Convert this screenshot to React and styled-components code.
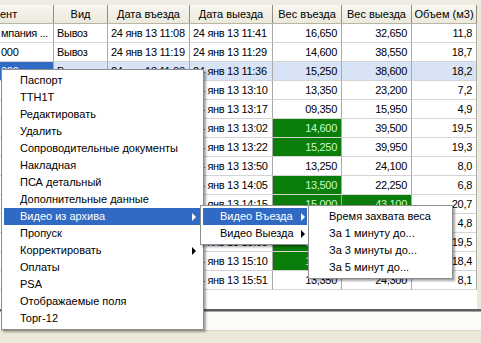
import React from 'react';
import styled, { createGlobalStyle } from 'styled-components';

const GlobalStyle = createGlobalStyle`
    html, body {
        margin: 0;
        padding: 0;
        background: #ece9d8;
    }
    body {
        font-family: "Liberation Sans", Arial, sans-serif;
        font-size: 11px;
    }
`;

const COLS = [54, 54, 82, 83, 69, 70, 65];
const ALIGN = ['left', 'left', 'left', 'left', 'right', 'right', 'right'];

const Window = styled.div`
    position: relative;
    width: 481px;
    height: 343px;
    overflow: hidden;
    display: flex;
    flex-direction: column;
    background: #ece9d8;
`;

const TopStrip = styled.div`
    height: 5px;
    background: #efede2;
`;

const Grid = styled.div`
    display: flex;
    flex-direction: column;
    width: 477px;
    background: #fff;
`;

const HeaderRow = styled.div`
    display: flex;
    height: 19px;
    background: linear-gradient(#f8f7f1, #ebe9dc);
    border-bottom: 1px solid #b9b5a4;
    box-sizing: border-box;
`;

const HeaderCell = styled.div`
    width: ${p => p.$w}px;
    box-sizing: border-box;
    border-right: 1px solid #8f8c80;
    line-height: 18px;
    text-align: ${p => (p.$cut ? 'left' : 'center')};
    white-space: nowrap;
    overflow: hidden;
    color: #000;
`;

const Row = styled.div`
    display: flex;
    height: 19px;
`;

const Cell = styled.div`
    width: ${p => p.$w}px;
    box-sizing: border-box;
    border-right: 1px solid #a9a9a9;
    border-bottom: 1px solid #d4d4d4;
    line-height: 18px;
    letter-spacing: -0.3px;
    white-space: nowrap;
    overflow: hidden;
    text-align: ${p => p.$align};
    padding: ${p => (p.$align === 'right' ? '0 4px 0 0' : p.$first ? '0 0 0 1px' : '0 0 0 3px')};
    background: ${p => (p.$focus ? '#316ac5' : p.$green ? '#0b7d0b' : p.$sel ? '#d8e3f5' : '#fff')};
    color: ${p => (p.$focus ? '#fff' : p.$green ? '#c8f7c8' : '#000')};
`;

const Filler = styled.div`
    height: 19px;
    background: #fff;
`;

const Splitter = styled.div`
    height: 3px;
    background: #5e5e5e;
    border-bottom: 1px solid #a5a5a5;
    box-sizing: border-box;
`;

const WhitePanel = styled.div`
    height: 18px;
    background: #fbfbf8;
`;

const StatusBar = styled.div`
    flex: 1;
    background: #ece9d8;
    border-top: 1px solid #dcd8c6;
`;

const Menu = styled.div`
    position: absolute;
    left: ${p => p.$x}px;
    top: ${p => p.$y}px;
    width: ${p => p.$w}px;
    box-sizing: border-box;
    background: #fff;
    border: 1px solid #8d8d8d;
    padding: ${p => p.$pad}px;
    box-shadow: 2px 2px 2px rgba(0, 0, 0, 0.35);
    display: flex;
    flex-direction: column;
`;

const Item = styled.div`
    height: 17px;
    line-height: 17px;
    display: flex;
    align-items: center;
    justify-content: space-between;
    padding: 0 ${p => p.$right}px 0 ${p => p.$left}px;
    background: ${p => (p.$active ? '#316ac5' : 'transparent')};
    color: ${p => (p.$active ? '#fff' : '#000')};
    white-space: nowrap;
`;

const Arrow = styled.span`
    width: 0;
    height: 0;
    border-top: 4px solid transparent;
    border-bottom: 4px solid transparent;
    border-left: 4px solid ${p => (p.$active ? '#fff' : '#000')};
`;

// cells that sit fully under the popup menus are left blank
const rows = [
    { c: ['мпания ...', 'Вывоз', '24 янв 13 11:08', '24 янв 13 11:41', '16,650', '32,650', '11,8'] },
    { c: ['000', 'Вывоз', '24 янв 13 11:19', '24 янв 13 11:29', '14,600', '38,550', '18,7'] },
    { c: ['000', 'Вывоз', '24 янв 13 11:08', '24 янв 13 11:36', '15,250', '38,600', '18,2'], sel: true },
    { c: ['', '', '', '24 янв 13 13:10', '13,350', '23,200', '7,2'] },
    { c: ['', '', '', '24 янв 13 13:17', '09,350', '15,950', '4,9'] },
    { c: ['', '', '', '24 янв 13 13:02', '14,600', '39,500', '19,5'], g: [4] },
    { c: ['', '', '', '24 янв 13 13:22', '15,250', '39,950', '19,3'], g: [4] },
    { c: ['', '', '', '24 янв 13 13:50', '13,250', '24,100', '8,0'] },
    { c: ['', '', '', '24 янв 13 14:05', '13,500', '22,250', '6,8'], g: [4] },
    { c: ['', '', '', '24 янв 13 14:15', '15,000', '43,100', '20,7'], g: [4, 5] },
    { c: ['', '', '', '', '', '', '4,8'] },
    { c: ['', '', '', '24 янв 13 15:05', '14,950', '', '19,5'], g: [4] },
    { c: ['', '', '', '24 янв 13 15:10', '14,700', '', '18,4'], g: [4] },
    { c: ['', '', '', '24 янв 13 15:51', '13,350', '24,300', '8,1'] },
];

const headers = ['ент', 'Вид', 'Дата въезда', 'Дата выезда', 'Вес въезда', 'Вес выезда', 'Объем (м3)'];

const mainItems = [
    'Паспорт', 'ТТН1Т', 'Редактировать', 'Удалить', 'Сопроводительные документы',
    'Накладная', 'ПСА детальный', 'Дополнительные данные', 'Видео из архива', 'Пропуск',
    'Корректировать', 'Оплаты', 'PSA', 'Отображаемые поля', 'Торг-12',
];
const withArrow = ['Видео из архива', 'Корректировать'];

const App = () => (
    <Window>
        <GlobalStyle />
        <TopStrip />
        <Grid>
            <HeaderRow>
                {headers.map((h, i) => (
                    <HeaderCell key={h} $w={COLS[i]} $cut={i === 0}>{h}</HeaderCell>
                ))}
            </HeaderRow>
            {rows.map((r, ri) => (
                <Row key={ri}>
                    {r.c.map((t, i) => (
                        <Cell
                            key={i}
                            $w={COLS[i]}
                            $align={ALIGN[i]}
                            $first={i === 0}
                            $sel={r.sel}
                            $focus={r.sel && i === 0}
                            $green={r.g && r.g.includes(i)}
                        >
                            {t}
                        </Cell>
                    ))}
                </Row>
            ))}
            <Filler />
        </Grid>
        <Splitter />
        <WhitePanel />
        <StatusBar />

        <Menu $x={1} $y={69} $w={203} $pad={2}>
            {mainItems.map(t => (
                <Item key={t} $left={16} $right={5} $active={t === 'Видео из архива'}>
                    <span>{t}</span>
                    {withArrow.includes(t) && <Arrow $active={t === 'Видео из архива'} />}
                </Item>
            ))}
        </Menu>

        <Menu $x={200} $y={205} $w={110} $pad={2}>
            <Item $left={17} $right={2} $active>
                <span>Видео Въезда</span>
                <Arrow $active />
            </Item>
            <Item $left={17} $right={2}>
                <span>Видео Выезда</span>
                <Arrow />
            </Item>
        </Menu>

        <Menu $x={308} $y={205} $w={145} $pad={2}>
            <Item $left={18} $right={4}><span>Время захвата веса</span></Item>
            <Item $left={18} $right={4}><span>За 1 минуту до...</span></Item>
            <Item $left={18} $right={4}><span>За 3 минуты до...</span></Item>
            <Item $left={18} $right={4}><span>За 5 минут до...</span></Item>
        </Menu>
    </Window>
);

export default App;
